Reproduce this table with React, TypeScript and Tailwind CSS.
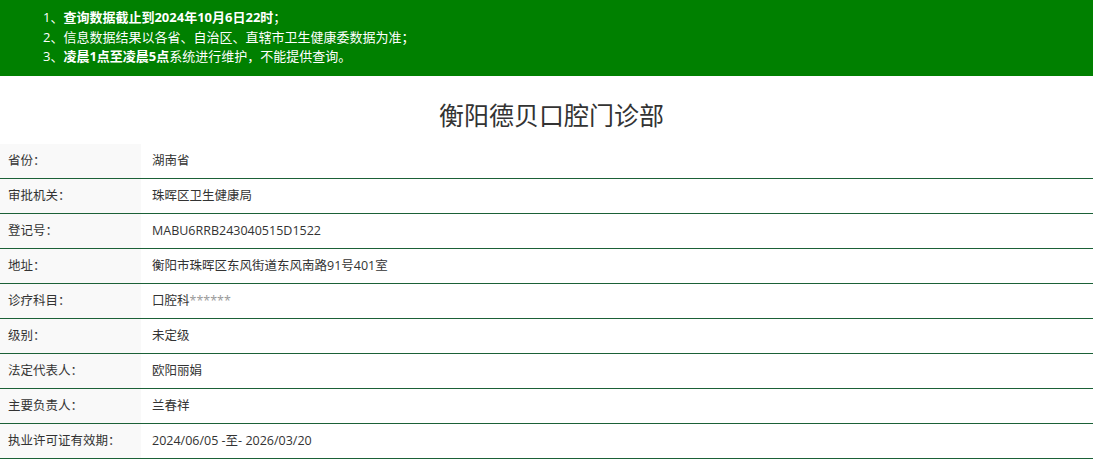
const rows: [string, React.ReactNode][] = [
  ["省份：", "湖南省"],
  ["审批机关：", "珠晖区卫生健康局"],
  ["登记号：", "MABU6RRB243040515D1522"],
  ["地址：", "衡阳市珠晖区东风街道东风南路91号401室"],
  [
    "诊疗科目：",
    <>
      口腔科<span className="text-[#999]">******</span>
    </>,
  ],
  ["级别：", "未定级"],
  ["法定代表人：", "欧阳丽娟"],
  ["主要负责人：", "兰春祥"],
  ["执业许可证有效期：", "2024/06/05 -至- 2026/03/20"],
]

export default function App() {
  return (
    <div
      className="w-[1093px] h-[465px] bg-white text-[#333] overflow-hidden"
      style={{ fontFamily: '"Open Sans", "Noto Sans CJK SC", sans-serif' }}
    >
      {/* Notice */}
      <div className="bg-[#008000] text-white text-[13px] leading-[19.5px] h-[76px] pt-[8px] pl-[43px]">
        <p>
          1、<b>查询数据截止到2024年10月6日22时</b>；
        </p>
        <p>2、信息数据结果以各省、自治区、直辖市卫生健康委数据为准；</p>
        <p>
          3、<b>凌晨1点至凌晨5点</b>系统进行维护，不能提供查询。
        </p>
      </div>

      {/* Title */}
      <h1 className="h-[66px] flex items-center justify-center text-[25px] text-[#333] pt-[14px] pl-[10px]">
        衡阳德贝口腔门诊部
      </h1>

      {/* Details */}
      <div className="text-[12.5px] pt-[2px]">
        {rows.map(([label, value], i) => (
          <div key={i} className="flex h-[35px] border-b border-[#1b6137]">
            <div className="w-[141px] bg-[#f9f9f9] pl-[8px] flex items-center">{label}</div>
            <div className="flex-1 pl-[11px] flex items-center">{value}</div>
          </div>
        ))}
      </div>
    </div>
  )
}
